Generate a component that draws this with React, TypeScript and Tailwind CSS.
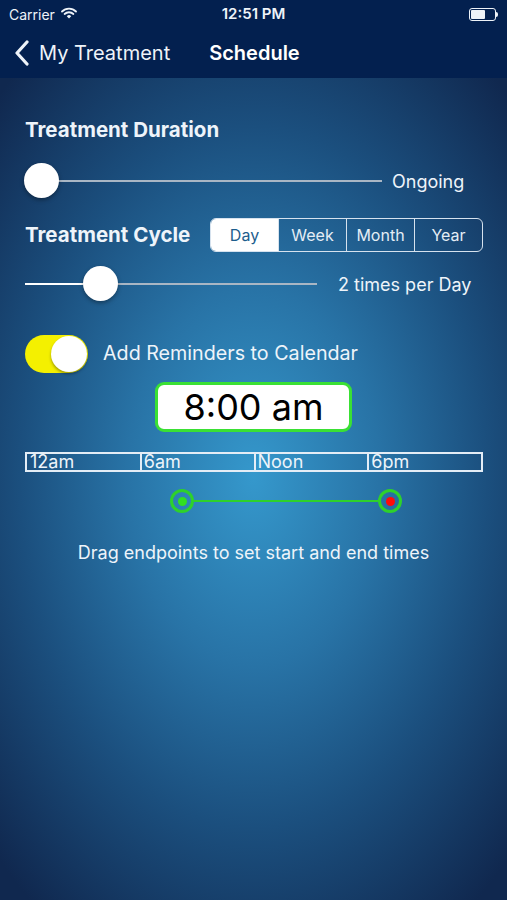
import React from 'react';

const segments = ['Day', 'Week', 'Month', 'Year'];
const hours = ['12am', '6am', 'Noon', '6pm'];

export default function App() {
  return (
    <div
      className="flex h-[900px] w-[507px] flex-col overflow-hidden text-[#eef4fa] bg-[radial-gradient(ellipse_360px_540px_at_50%_53%,#3598cc_0%,#2873a6_35%,#1b4f7e_65%,#10284f_100%)]"
      style={{ fontFamily: 'Inter, "Noto Sans", sans-serif' }}
    >
      <header className="bg-[#03204f]">
        <StatusBar />
        <nav className="flex h-[50px] items-center">
          <button className="flex items-center pl-[14px] text-[20px] text-[#eef3f9]">
            <svg width="17" height="26" viewBox="0 0 17 26" className="mr-[8px]">
              <path d="M13 2 L3 13 L13 24" fill="none" stroke="#eef3f9" strokeWidth="3.2" strokeLinecap="round" strokeLinejoin="round" />
            </svg>
            My Treatment
          </button>
          <h1 className="ml-[39px] text-[20px] font-semibold text-white">Schedule</h1>
        </nav>
      </header>

      <main className="flex flex-col px-[25px]">
        <h2 className="mt-[40px] text-[20.5px] font-bold leading-[24px]">Treatment Duration</h2>

        <div className="mt-[21px] flex h-[36px] items-center">
          <Slider width={357} value={-1} />
          <span className="ml-[10px] text-[18px]">Ongoing</span>
        </div>

        <div className="mt-[19px] flex items-center justify-between">
          <h2 className="text-[20.5px] font-bold">Treatment Cycle</h2>
          <div className="mr-[-1px] flex h-[34px] w-[273px] overflow-hidden rounded-[6px] border border-[#d6e2ee]">
            {segments.map((s, i) => (
              <div
                key={s}
                className={
                  i === 0
                    ? 'flex flex-1 items-center justify-center bg-white text-[16px] text-[#1d5d8d]'
                    : 'flex flex-1 items-center justify-center border-l border-[#d6e2ee] text-[16px] text-[#e4edf5]'
                }
              >
                {s}
              </div>
            ))}
          </div>
        </div>

        <div className="mt-[14px] flex h-[36px] items-center">
          <Slider width={292} value={58} filled />
          <span className="ml-[21px] text-[18px]">2 times per Day</span>
        </div>

        <div className="mt-[33px] flex items-center">
          <div className="flex h-[38px] w-[63px] items-center justify-end rounded-full bg-[#f4f000] pr-[1px]">
            <div className="h-[36px] w-[36px] rounded-full bg-white shadow-[0_2px_3px_rgba(0,0,0,0.35)]" />
          </div>
          <span className="ml-[15px] text-[19.7px]">Add Reminders to Calendar</span>
        </div>

        <div className="mt-[9px] flex justify-center">
          <div className="flex h-[50px] w-[197px] items-center justify-center rounded-[9px] border-[3px] border-[#3ae034] bg-white text-[36px] text-black">
            8:00 am
          </div>
        </div>

        <div className="mt-[20px] flex h-[20px] w-[458px] border-2 border-[#e4edf6]">
          {hours.map((h, i) => (
            <div
              key={h}
              className={
                i === 0
                  ? 'flex flex-1 items-center pl-[3px] text-[18px] leading-none'
                  : 'flex flex-1 items-center border-l-2 border-[#e4edf6] pl-[2px] text-[18px] leading-none'
              }
            >
              {h}
            </div>
          ))}
        </div>

        <div className="mt-[17px] flex items-center pl-[145px]">
          <Handle dot="#31e021" />
          <div className="h-[2px] w-[184px] bg-[#2ed12b]" />
          <Handle dot="#ff0a0a" />
        </div>

        <p className="mt-[26px] text-center text-[18px]">Drag endpoints to set start and end times</p>
      </main>
    </div>
  );
}

function StatusBar() {
  return (
    <div className="relative flex h-[28px] items-center px-[9px] text-[14px] text-[#eef3f9]">
      <span>Carrier</span>
      <svg width="16" height="12" viewBox="0 0 16 12" className="ml-[6px] mt-[-3px]">
        <path d="M1 4.5 A10 10 0 0 1 15 4.5" fill="none" stroke="#eef3f9" strokeWidth="1.8" strokeLinecap="round" />
        <path d="M3.6 7 A6.4 6.4 0 0 1 12.4 7" fill="none" stroke="#eef3f9" strokeWidth="1.8" strokeLinecap="round" />
        <path d="M8 11.5 L5.8 9.2 A3 3 0 0 1 10.2 9.2 Z" fill="#eef3f9" />
      </svg>
      <span className="absolute left-1/2 -translate-x-1/2 text-[15px] font-semibold">12:51 PM</span>
      <div className="ml-auto flex items-center">
        <div className="flex h-[13px] w-[27px] items-center rounded-[3px] border border-[#eef3f9] p-[1px]">
          <div className="h-full w-[14px] rounded-[1px] bg-[#eef3f9]" />
        </div>
        <div className="h-[5px] w-[2px] rounded-r-sm bg-[#eef3f9]" />
      </div>
    </div>
  );
}

function Slider({ width, value, filled }: { width: number; value: number; filled?: boolean }) {
  return (
    <div className="relative flex h-[36px] items-center" style={{ width }}>
      <div className="h-[2px] w-full bg-[#a9b6c4]" />
      {filled && <div className="absolute left-0 top-[17px] h-[2px] bg-white" style={{ width: value }} />}
      <div
        className="absolute top-0 h-[35px] w-[35px] rounded-full bg-white shadow-[0_2px_4px_rgba(0,0,0,0.35)]"
        style={{ left: value }}
      />
    </div>
  );
}

function Handle({ dot }: { dot: string }) {
  return (
    <div className="flex h-[24px] w-[24px] shrink-0 items-center justify-center rounded-full border-[3px] border-[#2ed12b]">
      <div className="h-[9px] w-[9px] rounded-full" style={{ background: dot }} />
    </div>
  );
}
